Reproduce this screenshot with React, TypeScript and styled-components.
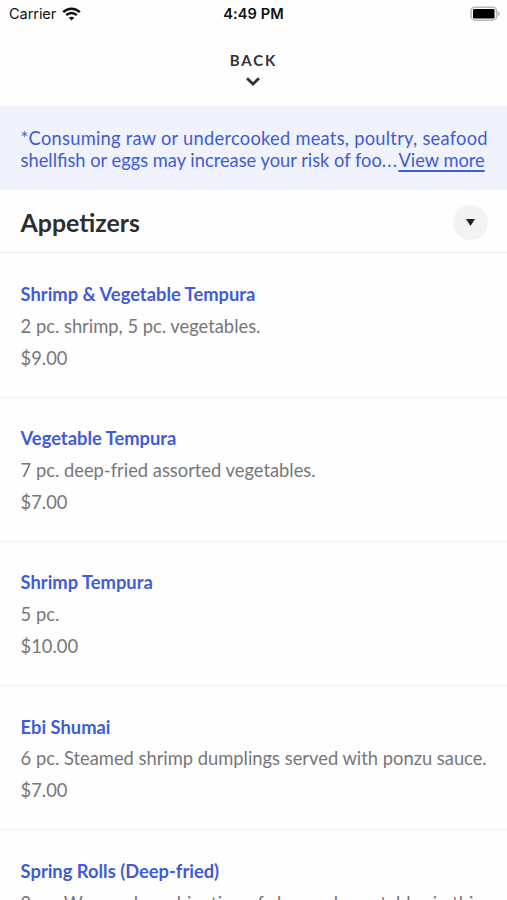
import React from "react";
import styled, { createGlobalStyle } from "styled-components";

const Global = createGlobalStyle`
  * { box-sizing: border-box; }
  html, body { margin: 0; background: #fefefe; overflow: hidden; }
  body { font-family: Lato, "Open Sans", sans-serif; }
`;
const Screen = styled.main`
  width: 507px;
  height: 900px;
  overflow: hidden;
  background: #fefefe;
`;
const StatusBar = styled.div`
  height: 28px;
  padding: 0 7px 0 9px;
  display: grid;
  grid-template-columns: 1fr auto 1fr;
  align-items: center;
  color: #111;
  font: 400 14.6px/28px Inter, "Liberation Sans", sans-serif;
`;
const Carrier = styled.div`
  display: flex;
  align-items: center;
  gap: 6px;
  letter-spacing: -0.1px;
`;
const Time = styled.div`
  font-weight: 600;
  letter-spacing: 0.1px;
  margin-right: 2px;
`;
const Battery = styled.div`
  display: flex;
  justify-content: flex-end;
`;
const BackButton = styled.button`
  width: 100%;
  height: 78px;
  padding: 22px 0 0;
  border: 0;
  background: transparent;
  display: flex;
  flex-direction: column;
  align-items: center;
  gap: 7px;
  color: #333;
  font: 700 15px/20px Lato, sans-serif;
  letter-spacing: 1.9px;

  svg {
    margin-right: 1px;
  }
`;
const Notice = styled.section`
  height: 84px;
  padding: 21px 0 0 20.6px;
  background: #f0f2fe;
  color: #3f5cd3;
  font-size: 18.3px;
  line-height: 22px;
`;
const NoticeLine = styled.div<{ $spacing: number }>`
  white-space: nowrap;
  letter-spacing: ${(p) => p.$spacing}px;
`;
const Dots = styled.span`
  letter-spacing: 1.2px;
`;
const ViewMore = styled.a`
  text-decoration: underline;
  text-decoration-thickness: 1.5px;
  text-underline-offset: 3px;
`;
const SectionHeader = styled.header`
  height: 63.4px;
  padding: 0 19px 0 20.5px;
  display: flex;
  align-items: center;
  justify-content: space-between;
  border-bottom: 1px solid #eeeeef;
`;
const SectionTitle = styled.h1`
  margin: 1px 0 0;
  color: #2d2e2e;
  font-size: 24.9px;
  line-height: 30px;
  font-weight: 700;
`;
const Toggle = styled.button`
  width: 35px;
  height: 35px;
  padding: 0;
  border: 0;
  border-radius: 50%;
  background: #f3f3f3;
  display: grid;
  place-items: center;
  margin-top: 2px;
`;
const MenuItem = styled.article`
  height: 144.2px;
  padding: 25.6px 0 0 20.6px;
  border-bottom: 1.5px solid #f0f0f1;
  font-size: 18.33px;
  line-height: 31.8px;
  white-space: nowrap;
  color: #777;
`;
const ItemName = styled.h2`
  margin: 0;
  color: #405cd5;
  font-size: 18.33px;
  line-height: inherit;
  font-weight: 700;
`;
const Line = styled.div``;

const items = [
  { name: "Shrimp & Vegetable Tempura", description: "2 pc. shrimp, 5 pc. vegetables.", price: "$9.00" },
  { name: "Vegetable Tempura", description: "7 pc. deep-fried assorted vegetables.", price: "$7.00" },
  { name: "Shrimp Tempura", description: "5 pc.", price: "$10.00" },
  { name: "Ebi Shumai", description: "6 pc. Steamed shrimp dumplings served with ponzu sauce.", price: "$7.00" },
  { name: "Spring Rolls (Deep-fried)", description: "2 pc. Wrapped combination of chopped vegetables in thin", price: "" },
];

export default function App() {
  return (
    <Screen>
      <Global />
      <StatusBar>
        <Carrier>
          Carrier
          <svg width="19" height="14" viewBox="0 0 19 14" fill="none" stroke="#111" strokeWidth="2.5">
            <path d="M1.2 5.1C5.9.5 13.1.5 17.8 5.1M4.2 8.2c3-2.9 7.6-2.9 10.6 0" />
            <path d="M6.7 10.8c1.6-1.5 4-1.5 5.6 0L9.5 13.6Z" fill="#111" stroke="none" />
          </svg>
        </Carrier>
        <Time>4:49 PM</Time>
        <Battery>
          <svg width="31" height="16" viewBox="0 0 31 16">
            <rect x="2" y="1.2" width="25.6" height="13" rx="4" fill="#fefefe" stroke="#b9b9b9" strokeWidth="1.6" />
            <rect x="4" y="3" width="21.5" height="9.5" rx="1.2" fill="#000" />
            <path d="M29 5.5c2.2.8 2.2 3.7 0 4.5Z" fill="#b0b0b0" />
          </svg>
        </Battery>
      </StatusBar>
      <BackButton>
        BACK
        <svg width="14" height="9" viewBox="0 0 14 9" fill="none" stroke="#333" strokeWidth="2.8">
          <path d="m1 1.3 6 5.7 6-5.7" />
        </svg>
      </BackButton>
      <Notice>
        <NoticeLine $spacing={0.26}>*Consuming raw or undercooked meats, poultry, seafood</NoticeLine>
        <NoticeLine $spacing={0}>
          shellfish or eggs may increase your risk of foo<Dots>...</Dots>
          <ViewMore>View more</ViewMore>
        </NoticeLine>
      </Notice>
      <SectionHeader>
        <SectionTitle>Appetizers</SectionTitle>
        <Toggle aria-label="Collapse Appetizers">
          <svg width="9" height="7" viewBox="0 0 9 7"><path d="M0 0h9L4.5 7Z" fill="#222" /></svg>
        </Toggle>
      </SectionHeader>
      {items.map((item) => (
        <MenuItem key={item.name}>
          <ItemName>{item.name}</ItemName>
          <Line>{item.description}</Line>
          <Line>{item.price}</Line>
        </MenuItem>
      ))}
    </Screen>
  );
}
